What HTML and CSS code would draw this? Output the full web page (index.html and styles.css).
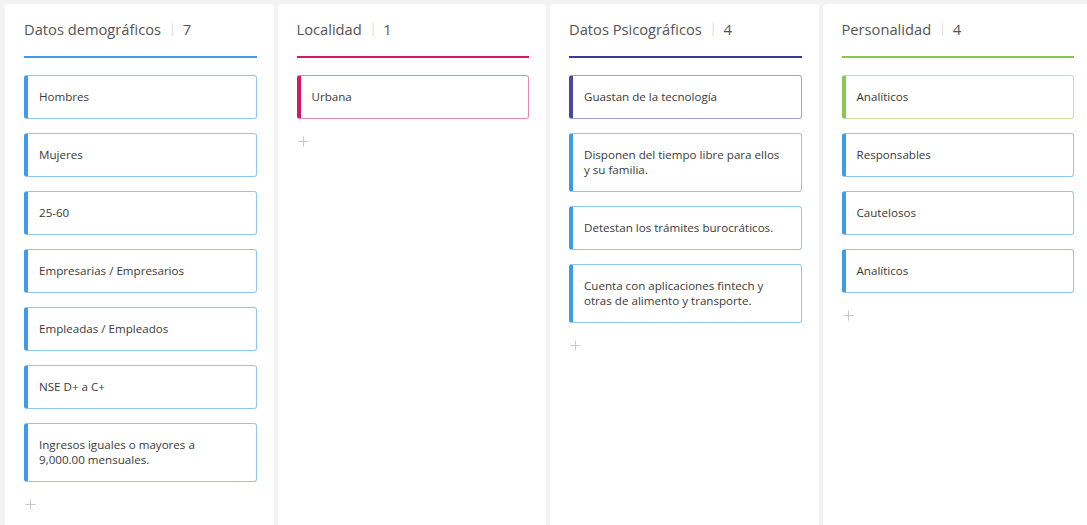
FILE: index.html
```html
<!DOCTYPE html>
<html lang="es">
<head>
<meta charset="utf-8">
<title>Tablero</title>
<link rel="stylesheet" href="styles.css">
</head>
<body>
<div class="board">
  <section class="col col-blue">
    <header class="col-head"><span class="col-title">Datos demográficos</span><span class="sep">|</span><span class="count">7</span></header>
    <div class="cards">
      <div class="card">Hombres</div>
      <div class="card">Mujeres</div>
      <div class="card">25-60</div>
      <div class="card">Empresarias / Empresarios</div>
      <div class="card">Empleadas / Empleados</div>
      <div class="card">NSE D+ a C+</div>
      <div class="card">Ingresos iguales o mayores a 9,000.00 mensuales.</div>
    </div>
    <div class="add"><svg width="11" height="11" viewBox="0 0 11 11"><path d="M5.5 0.5v10M0.5 5.5h10" stroke="#c9c9c9" stroke-width="1" fill="none"/></svg></div>
  </section>
  <section class="col col-pink">
    <header class="col-head"><span class="col-title">Localidad</span><span class="sep">|</span><span class="count">1</span></header>
    <div class="cards">
      <div class="card card-pink">Urbana</div>
    </div>
    <div class="add"><svg width="11" height="11" viewBox="0 0 11 11"><path d="M5.5 0.5v10M0.5 5.5h10" stroke="#c9c9c9" stroke-width="1" fill="none"/></svg></div>
  </section>
  <section class="col col-indigo">
    <header class="col-head"><span class="col-title">Datos Psicográficos</span><span class="sep">|</span><span class="count">4</span></header>
    <div class="cards">
      <div class="card card-indigo">Guastan de la tecnología</div>
      <div class="card">Disponen del tiempo libre para ellos y su familia.</div>
      <div class="card">Detestan los trámites burocráticos.</div>
      <div class="card">Cuenta con aplicaciones fintech y otras de alimento y transporte.</div>
    </div>
    <div class="add"><svg width="11" height="11" viewBox="0 0 11 11"><path d="M5.5 0.5v10M0.5 5.5h10" stroke="#c9c9c9" stroke-width="1" fill="none"/></svg></div>
  </section>
  <section class="col col-green">
    <header class="col-head"><span class="col-title">Personalidad</span><span class="sep">|</span><span class="count">4</span></header>
    <div class="cards">
      <div class="card card-green">Analíticos</div>
      <div class="card">Responsables</div>
      <div class="card">Cautelosos</div>
      <div class="card">Analíticos</div>
    </div>
    <div class="add"><svg width="11" height="11" viewBox="0 0 11 11"><path d="M5.5 0.5v10M0.5 5.5h10" stroke="#c9c9c9" stroke-width="1" fill="none"/></svg></div>
  </section>
</div>
</body>
</html>
```
FILE: styles.css
```css
html, body {
  margin: 0;
  padding: 0;
  height: 100%;
  overflow: hidden;
}
body {
  background: #f3f3f3;
  font-family: "Open Sans", "Noto Sans", sans-serif;
  color: #444;
}
.board {
  display: flex;
  gap: 4px;
  padding: 4px 0 0 5px;
  height: 100%;
  box-sizing: border-box;
}
.col {
  flex: 0 0 268.5px;
  background: #fff;
  border-radius: 4px 4px 0 0;
  padding: 0 17px 0 19px;
  box-sizing: border-box;
  display: flex;
  flex-direction: column;
}
.col-head {
  display: flex;
  align-items: flex-start;
  height: 26px;
  padding: 13px 0 13px 0;
  line-height: 24px;
  font-size: 14.7px;
  color: #555;
  border-bottom: 2px solid #3d9be9;
}
.col-title { white-space: nowrap; }
.sep {
  color: #dadada;
  font-size: 12px;
  margin: 0 7px 0 8px;
}
.count { color: #555; }
.col-pink .col-head { border-bottom-color: #d5166a; }
.col-indigo .col-head { border-bottom-color: #3b3a98; }
.col-green .col-head { border-bottom-color: #8bc652; }

.cards {
  display: flex;
  flex-direction: column;
  gap: 14px;
  margin-top: 16.5px;
}
.card {
  font-size: 11.6px;
  line-height: 15px;
  padding: 13px 14px 14px 11px;
  border: 1px solid #8ec7f2;
  border-left: 4px solid #3d9be9;
  border-radius: 3px;
  background: #fff;
  color: #3a3a3a;
}
.card-pink {
  border-color: #e98ab4;
  border-left-color: #d5166a;
}
.card-indigo {
  border-color: #a3a2d6;
  border-left-color: #4847a6;
}
.card-green {
  border-color: #bfe2a0;
  border-left-color: #8bc652;
}
.add {
  margin: 17px 0 0 1px;
  height: 11px;
  line-height: 0;
}
```
